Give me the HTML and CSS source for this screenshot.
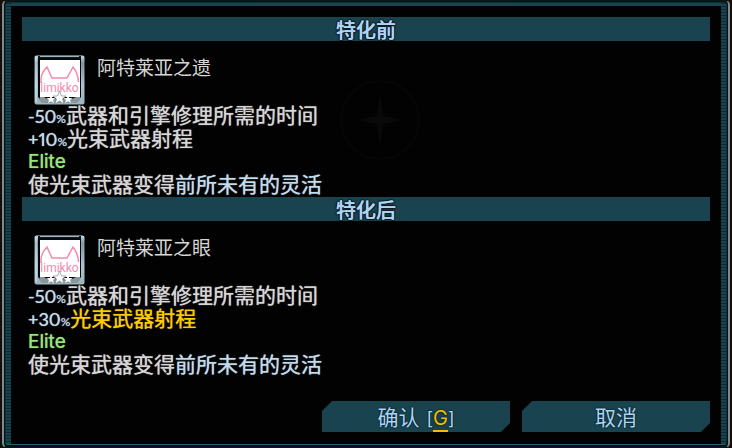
FILE: index.html
```
<!DOCTYPE html>
<html lang="zh-CN">
<head>
    <meta charset="UTF-8">
    <title>特化</title>
    <link rel="stylesheet" href="styles.css">
</head>
<body>
    <svg class="defs" width="0" height="0" aria-hidden="true">
        <defs>
            <linearGradient id="metal" x1="0" y1="0" x2="0" y2="1">
                <stop offset="0" stop-color="#c4dbe8"/>
                <stop offset="0.15" stop-color="#8199a5"/>
                <stop offset="0.6" stop-color="#a9c3d0"/>
                <stop offset="1" stop-color="#9cb6c0"/>
            </linearGradient>
            <symbol id="augment" viewBox="0 0 51 50">
                <rect x="0.5" y="0.5" width="50" height="49" rx="2" fill="url(#metal)"/>
                <path d="M4 1H47V3H4Z" fill="#10181c"/>
                <path d="M6 1.500H45" stroke="#9db4c2" stroke-width="1"/>
                <path d="M2 2V47" stroke="#d5e9f3" stroke-width="1"/>
                <path d="M4 3H47V42L43 47H8L4 42Z" fill="#050708"/>
                <rect x="6" y="5" width="40" height="37" fill="#fff"/>
                <path d="M6 42L10 42L13 44H38L42 42H46V45L43 48H8L5 45Z" fill="#89979c"/>
                <path d="M7 28V25Q7 18 13 12L18 23H33L39 12Q44 18 44.500 27" fill="none" stroke="#f48aac" stroke-width="1.500"/>
                <path d="M17 40L18.200 43H21.500L19 45L20 48L17 46.200L14 48L15 45L12.500 43H15.800ZM34 40L35.200 43H38.500L36 45L37 48L34 46.200L31 48L32 45L29.500 43H32.800Z" fill="#fff"/>
                <path d="M25.500 36L27.500 41H32L28.500 44L30 49L25.500 46L21 49L22.500 44L19 41H23.500Z" fill="#fff" stroke="#7b8c93" stroke-width="0.700"/>
            </symbol>
        </defs>
    </svg>

    <main class="window">
        <div class="panel">
            <svg class="star" viewBox="0 0 84 84" aria-hidden="true">
                <circle cx="42" cy="42" r="39" fill="none" stroke="#060606" stroke-width="2"/>
                <path d="M42 14L45 38L66 42L45 46L42 70L39 46L18 42L39 38Z" fill="#090909"/>
            </svg>

            <section class="augment">
                <h2 class="bar">特化前</h2>
                <div class="head">
                    <div class="icon">
                        <svg class="icon-frame" aria-hidden="true"><use href="#augment"/></svg>
                        <span class="icon-text">limikko</span>
                    </div>
                    <h3 class="name">阿特莱亚之遗</h3>
                </div>
                <div class="lines">
                    <p><span class="num">-50<small>%</small></span>武器和引擎修理所需的时间</p>
                    <p><span class="num">+10<small>%</small></span>光束武器射程</p>
                    <p class="elite">Elite</p>
                    <p>使光束武器变得<span class="blue">前所未有的灵活</span></p>
                </div>
            </section>

            <section class="augment">
                <h2 class="bar">特化后</h2>
                <div class="head">
                    <div class="icon">
                        <svg class="icon-frame" aria-hidden="true"><use href="#augment"/></svg>
                        <span class="icon-text">limikko</span>
                    </div>
                    <h3 class="name">阿特莱亚之眼</h3>
                </div>
                <div class="lines">
                    <p><span class="num">-50<small>%</small></span>武器和引擎修理所需的时间</p>
                    <p><span class="num">+30<small>%</small></span><span class="changed">光束武器射程</span></p>
                    <p class="elite">Elite</p>
                    <p>使光束武器变得<span class="blue">前所未有的灵活</span></p>
                </div>
            </section>

            <div class="buttons">
                <button class="btn" type="button">确认<span class="hotkey">[<span class="key">G</span>]</span></button>
                <button class="btn" type="button">取消</button>
            </div>
        </div>
    </main>
</body>
</html>
```
FILE: styles.css
```
* {
    box-sizing: border-box;
}
body {
    margin: 0;
    background-color: #160e0a;
    color: #d6d6d6;
    font-family: Lato, 'Noto Sans CJK SC', sans-serif;
}
h2, h3, p {
    margin: 0;
    font-weight: normal;
}
.defs {
    display: block;
}
/* outer metal edge */
.window {
    min-height: 100vh;
    margin: 0 2px;
    border: 2px solid #7d8a8d;
    border-top: 1px solid #0d1719;
    border-bottom: 1px solid #0d1719;
    border-radius: 5px;
    background-color: #0b1113;
    padding: 1px 1px 0;
}
/* inner teal edge with scanlines */
.panel {
    position: relative;
    border: 1px solid #122d35;
    border-bottom-color: #1d6272;
    border-radius: 3px;
    background:
        repeating-linear-gradient(#0c2a33 0 1px, #17444f 1px 3px) left / 5px 100% no-repeat,
        repeating-linear-gradient(#0c2a33 0 1px, #17444f 1px 3px) right / 5px 100% no-repeat,
        linear-gradient(#1d424c, #134855) top / 100% 3px no-repeat,
        #020202;
    padding: 14px 16px 12px;
}
.star {
    position: absolute;
    top: 75px;
    left: 50%;
    width: 84px;
    height: 84px;
    margin-left: -28px;
}
.augment {
    position: relative;
}
.bar {
    height: 24px;
    background-color: #19434f;
    color: #a9d6f5;
    font-size: 20px;
    font-weight: 500;
    line-height: 26px;
    text-align: center;
    text-shadow: 0 0 1px #a9d6f5, 1px 0 1px #000, -1px 0 1px #000, 0 1px 1px #000, 0 -1px 1px #000;
}
.head {
    display: flex;
    gap: 12px;
    padding: 14px 12px 0;
}
.icon {
    position: relative;
    width: 51px;
    height: 50px;
}
.icon-frame {
    display: block;
    width: 100%;
    height: 100%;
}
.icon-text {
    position: absolute;
    top: 26px;
    left: 0;
    width: 100%;
    color: #f48aac;
    font-family: Roboto, sans-serif;
    font-size: 12px;
    line-height: 14px;
    text-align: center;
}
.name {
    font-size: 19px;
    line-height: 26px;
}
.lines {
    padding-left: 6px;
    font-size: 21px;
    line-height: 20px;
    text-shadow: 0 0 1px currentColor;
}
.lines p {
    height: 23px;
}
.num {
    color: #c2dcec;
    font-size: 18px;
    font-variant-numeric: proportional-nums;
}
.num small {
    font-size: 12px;
}
.lines .elite {
    color: #97e57c;
    font-family: Inter, sans-serif;
    font-size: 19px;
    line-height: 21px;
}
.blue {
    color: #c2dcec;
}
.changed {
    color: #ffcc00;
}
.buttons {
    position: relative;
    display: flex;
    justify-content: flex-end;
    gap: 12px;
    padding-top: 24px;
}
.btn {
    width: 188px;
    height: 31px;
    border: none;
    padding: 0;
    background-color: #19434f;
    clip-path: polygon(10px 0, 100% 0, 100% 22px, calc(100% - 9px) 100%, 0 100%, 0 10px);
    color: #a9d6f5;
    font-family: inherit;
    font-size: 21px;
    line-height: 31px;
    text-shadow: 0 0 2px #000;
    cursor: pointer;
}
.btn:hover {
    background-color: #235a69;
}
.hotkey {
    margin-left: 7px;
    font-family: Inter, sans-serif;
    font-size: 18px;
}
.key {
    border-bottom: 2px solid #eec000;
    color: #eec000;
    font-size: 20px;
}
```
